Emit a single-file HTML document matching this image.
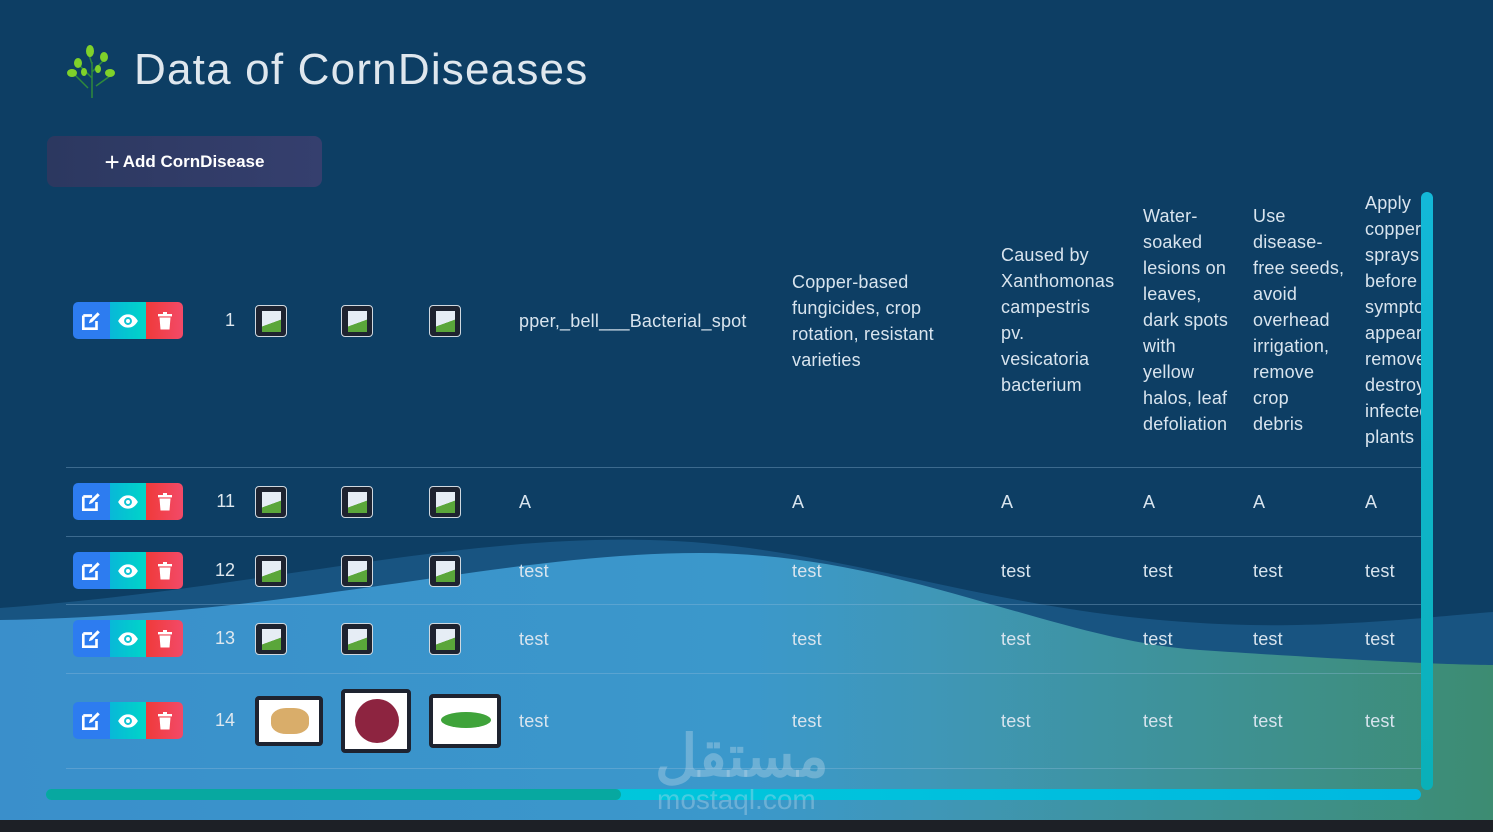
<!DOCTYPE html>
<html><head><meta charset="utf-8"><style>
*{margin:0;padding:0;box-sizing:border-box}
body{width:1493px;height:832px;overflow:hidden;background:#0d3e64;font-family:"Liberation Sans",sans-serif;color:#dfe8ef;position:relative}
.a{position:absolute}
.t{position:absolute;font-size:18px;line-height:26px;color:#d8e4ee;white-space:nowrap;letter-spacing:.2px}
.btns{position:absolute;left:73px;width:110px;height:37px;border-radius:5px;overflow:hidden;display:flex}
.btns div{width:37px;height:37px;display:flex;align-items:center;justify-content:center}
.b1{background:#2d7cf0}.b2{background:linear-gradient(90deg,#08b8d8,#00d5c8)}.b3{background:linear-gradient(90deg,#f03a3a,#f24a68)}
.img{position:absolute;width:32px;height:32px;background:#1e2330;border:1px solid #cfd8e0;border-radius:4px}
.img i{position:absolute;left:6px;top:5px;width:19px;height:21px;background:linear-gradient(160deg,#e6edf5 55%,#5aa63a 56%)}
.line{position:absolute;left:66px;width:1355px;height:1px;background:rgba(150,190,220,.35)}
.n{position:absolute;font-size:18px;width:30px;text-align:right;left:205px}
</style></head><body>
<svg width="0" height="0" style="position:absolute"><defs>
<symbol id="ed" viewBox="0 0 20 20"><path d="M3 5h8M3 5v12h12V10" stroke="#fff" stroke-width="2.4" fill="none"/><path d="M8 12l1-3 7-7 2 2-7 7z" fill="#fff"/></symbol>
<symbol id="ey" viewBox="0 0 20 20"><path d="M1 10C4 5 7 4 10 4s6 1 9 6c-3 5-6 6-9 6s-6-1-9-6z" fill="#fff"/><circle cx="10" cy="10" r="3.6" fill="#10c4d4"/><circle cx="10" cy="10" r="1.8" fill="#fff"/></symbol>
<symbol id="tr" viewBox="0 0 20 20"><rect x="3" y="3" width="14" height="2.4" fill="#fff"/><rect x="8" y="1" width="4" height="2" fill="#fff"/><path d="M4.5 6.5h11l-1 12h-9z" fill="#fff"/></symbol>
</defs></svg>
<svg class="a" style="left:0;top:0" width="1493" height="832">
<defs>
<linearGradient id="g1" x1="0" x2="1"><stop offset="0" stop-color="#3a8fcb"/><stop offset=".5" stop-color="#3b98cb"/><stop offset=".62" stop-color="#3f97b8"/><stop offset="1" stop-color="#3d8c72"/></linearGradient>
</defs>
<path d="M0 608 C250 590 450 535 650 540 C850 545 1000 620 1250 625 C1350 627 1450 615 1493 612 L1493 832 L0 832Z" fill="#1c5a88" opacity=".8"/>
<path d="M0 620 C300 615 500 553 700 553 C900 553 1050 640 1200 650 C1350 660 1450 665 1493 665 L1493 832 L0 832Z" fill="url(#g1)"/>
<rect x="0" y="820" width="1493" height="12" fill="#1d2026"/>
</svg>
<svg class="a" style="left:66px;top:42px" width="52" height="56" viewBox="0 0 52 56">
<g stroke="#2f8a3c" stroke-width="1.5" fill="none"><path d="M26 56V20M26 36L14 24M26 30L38 18M22 46L8 32M30 44L44 34M26 22L22 10"/></g>
<g fill="#7fd12a"><ellipse cx="24" cy="9" rx="4" ry="6"/><ellipse cx="12" cy="21" rx="4" ry="5"/><ellipse cx="6" cy="31" rx="5" ry="4"/><ellipse cx="38" cy="15" rx="4" ry="5"/><ellipse cx="44" cy="31" rx="5" ry="4"/><ellipse cx="18" cy="30" rx="3" ry="4"/><ellipse cx="32" cy="27" rx="3" ry="4"/></g>
</svg>
<div class="a" style="left:134px;top:45px;font-size:44px;color:#dfe7ee;letter-spacing:1.2px">Data of CornDiseases</div>
<div class="a" style="left:47px;top:136px;width:275px;height:51px;border-radius:8px;background:linear-gradient(90deg,#2c3860,#353f6e);color:#fff;font-weight:bold;font-size:17px;display:flex;align-items:center;justify-content:center"><span style="font-weight:normal;font-size:26px;margin-right:3px;line-height:20px">+</span>Add CornDisease</div>

<div class="btns" style="top:302px"><div class="b1"><svg width="22" height="22"><use href="#ed"/></svg></div><div class="b2"><svg width="22" height="22"><use href="#ey"/></svg></div><div class="b3"><svg width="20" height="20"><use href="#tr"/></svg></div></div>
<div class="n" style="top:310px">1</div>
<div class="img" style="left:255px;top:305px"><i></i></div><div class="img" style="left:341px;top:305px"><i></i></div><div class="img" style="left:429px;top:305px"><i></i></div>
<div class="t" style="left:519px;top:308px">pper,_bell___Bacterial_spot</div>
<div class="t" style="left:792px;top:269px">Copper-based<br>fungicides, crop<br>rotation, resistant<br>varieties</div>
<div class="t" style="left:1001px;top:242px">Caused by<br>Xanthomonas<br>campestris<br>pv.<br>vesicatoria<br>bacterium</div>
<div class="t" style="left:1143px;top:203px">Water-<br>soaked<br>lesions on<br>leaves,<br>dark spots<br>with<br>yellow<br>halos, leaf<br>defoliation</div>
<div class="t" style="left:1253px;top:203px">Use<br>disease-<br>free seeds,<br>avoid<br>overhead<br>irrigation,<br>remove<br>crop<br>debris</div>
<div class="t" style="left:1365px;top:190px;width:56px;overflow:hidden">Apply<br>copper<br>sprays<br>before<br>symptoms<br>appear,<br>remove<br>destroy<br>infected<br>plants</div>
<div class="line" style="top:467px"></div>

<div class="btns" style="top:483px"><div class="b1"><svg width="22" height="22"><use href="#ed"/></svg></div><div class="b2"><svg width="22" height="22"><use href="#ey"/></svg></div><div class="b3"><svg width="20" height="20"><use href="#tr"/></svg></div></div>
<div class="n" style="top:491px">11</div>
<div class="img" style="left:255px;top:486px"><i></i></div><div class="img" style="left:341px;top:486px"><i></i></div><div class="img" style="left:429px;top:486px"><i></i></div>
<div class="t" style="left:519px;top:489px">A</div><div class="t" style="left:792px;top:489px">A</div><div class="t" style="left:1001px;top:489px">A</div><div class="t" style="left:1143px;top:489px">A</div><div class="t" style="left:1253px;top:489px">A</div><div class="t" style="left:1365px;top:489px">A</div>
<div class="line" style="top:536px"></div>

<div class="btns" style="top:552px"><div class="b1"><svg width="22" height="22"><use href="#ed"/></svg></div><div class="b2"><svg width="22" height="22"><use href="#ey"/></svg></div><div class="b3"><svg width="20" height="20"><use href="#tr"/></svg></div></div>
<div class="n" style="top:560px">12</div>
<div class="img" style="left:255px;top:555px"><i></i></div><div class="img" style="left:341px;top:555px"><i></i></div><div class="img" style="left:429px;top:555px"><i></i></div>
<div class="t" style="left:519px;top:558px">test</div><div class="t" style="left:792px;top:558px">test</div><div class="t" style="left:1001px;top:558px">test</div><div class="t" style="left:1143px;top:558px">test</div><div class="t" style="left:1253px;top:558px">test</div><div class="t" style="left:1365px;top:558px">test</div>
<div class="line" style="top:604px"></div>

<div class="btns" style="top:620px"><div class="b1"><svg width="22" height="22"><use href="#ed"/></svg></div><div class="b2"><svg width="22" height="22"><use href="#ey"/></svg></div><div class="b3"><svg width="20" height="20"><use href="#tr"/></svg></div></div>
<div class="n" style="top:628px">13</div>
<div class="img" style="left:255px;top:623px"><i></i></div><div class="img" style="left:341px;top:623px"><i></i></div><div class="img" style="left:429px;top:623px"><i></i></div>
<div class="t" style="left:519px;top:626px">test</div><div class="t" style="left:792px;top:626px">test</div><div class="t" style="left:1001px;top:626px">test</div><div class="t" style="left:1143px;top:626px">test</div><div class="t" style="left:1253px;top:626px">test</div><div class="t" style="left:1365px;top:626px">test</div>
<div class="line" style="top:673px"></div>

<div class="btns" style="top:702px"><div class="b1"><svg width="22" height="22"><use href="#ed"/></svg></div><div class="b2"><svg width="22" height="22"><use href="#ey"/></svg></div><div class="b3"><svg width="20" height="20"><use href="#tr"/></svg></div></div>
<div class="n" style="top:710px">14</div>
<div class="a" style="left:255px;top:696px;width:68px;height:50px;background:#fff;border:4px solid #1e2330;border-radius:4px"><div style="margin:8px 12px;width:38px;height:26px;border-radius:40%;background:#d9ad6a"></div></div>
<div class="a" style="left:341px;top:689px;width:70px;height:64px;background:#fff;border:4px solid #1e2330;border-radius:4px"><div style="margin:6px 10px;width:44px;height:44px;border-radius:50%;background:#8d2440"></div></div>
<div class="a" style="left:429px;top:694px;width:72px;height:54px;background:#fff;border:4px solid #1e2330;border-radius:4px"><div style="margin:14px 8px;width:50px;height:16px;border-radius:50%;background:#3fa33a"></div></div>
<div class="t" style="left:519px;top:708px">test</div><div class="t" style="left:792px;top:708px">test</div><div class="t" style="left:1001px;top:708px">test</div><div class="t" style="left:1143px;top:708px">test</div><div class="t" style="left:1253px;top:708px">test</div><div class="t" style="left:1365px;top:708px">test</div>
<div class="line" style="top:768px"></div>

<div class="a" style="left:1421px;top:192px;width:12px;height:598px;border-radius:6px;background:linear-gradient(#13b8d8,#0ab0b8)"></div>
<div class="a" style="left:46px;top:789px;width:1375px;height:11px;border-radius:6px;background:linear-gradient(90deg,#00d0d8,#00b8e0)"></div>
<div class="a" style="left:46px;top:789px;width:575px;height:11px;border-radius:6px;background:#07a8a0"></div>
<div class="a" style="left:655px;top:722px;font-size:58px;font-weight:bold;color:rgba(200,220,235,.35)">مستقل</div>
<div class="a" style="left:657px;top:784px;font-size:28px;color:rgba(200,220,235,.35)">mostaql.com</div>
</body></html>
